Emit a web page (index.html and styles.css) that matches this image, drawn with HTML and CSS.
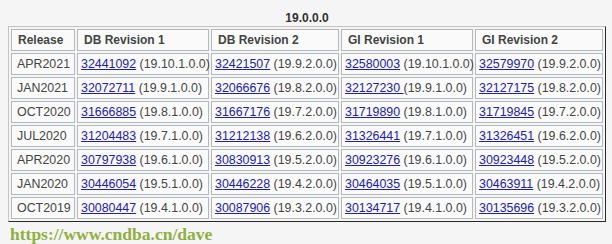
FILE: index.html
```html
<!DOCTYPE html>
<html>
<head>
<meta charset="utf-8">
<link rel="stylesheet" href="styles.css">
</head>
<body>
<table class="rev">
  <caption>19.0.0.0</caption>
  <thead>
    <tr>
      <th class="c1">Release</th>
      <th class="c2">DB Revision 1</th>
      <th class="c3">DB Revision 2</th>
      <th class="c4">GI Revision 1</th>
      <th class="c5">GI Revision 2</th>
    </tr>
  </thead>
  <tbody>
    <tr><td>APR2021</td><td><a href="#">32441092</a> (19.10.1.0.0)</td><td><a href="#">32421507</a> (19.9.2.0.0)</td><td><a href="#">32580003</a> (19.10.1.0.0)</td><td><a href="#">32579970</a> (19.9.2.0.0)</td></tr>
    <tr><td>JAN2021</td><td><a href="#">32072711</a> (19.9.1.0.0)</td><td><a href="#">32066676</a> (19.8.2.0.0)</td><td><a href="#">32127230&nbsp;</a>(19.9.1.0.0)</td><td><a href="#">32127175</a> (19.8.2.0.0)</td></tr>
    <tr><td>OCT2020</td><td><a href="#">31666885</a> (19.8.1.0.0)</td><td><a href="#">31667176</a> (19.7.2.0.0)</td><td><a href="#">31719890</a> (19.8.1.0.0)</td><td><a href="#">31719845</a> (19.7.2.0.0)</td></tr>
    <tr><td>JUL2020</td><td><a href="#">31204483</a> (19.7.1.0.0)</td><td><a href="#">31212138</a> (19.6.2.0.0)</td><td><a href="#">31326441</a> (19.7.1.0.0)</td><td><a href="#">31326451</a> (19.6.2.0.0)</td></tr>
    <tr><td>APR2020</td><td><a href="#">30797938</a> (19.6.1.0.0)</td><td><a href="#">30830913</a> (19.5.2.0.0)</td><td><a href="#">30923276</a> (19.6.1.0.0)</td><td><a href="#">30923448</a> (19.5.2.0.0)</td></tr>
    <tr><td>JAN2020</td><td><a href="#">30446054</a> (19.5.1.0.0)</td><td><a href="#">30446228</a> (19.4.2.0.0)</td><td><a href="#">30464035</a> (19.5.1.0.0)</td><td><a href="#">30463911</a> (19.4.2.0.0)</td></tr>
    <tr><td>OCT2019</td><td><a href="#">30080447</a> (19.4.1.0.0)</td><td><a href="#">30087906</a> (19.3.2.0.0)</td><td><a href="#">30134717</a> (19.4.1.0.0)</td><td><a href="#">30135696</a> (19.3.2.0.0)</td></tr>
  </tbody>
</table>
<div class="mark">https://www.cndba.cn/dave</div>
</body>
</html>
```
FILE: styles.css
```css
html, body {
  margin: 0;
  padding: 0;
}
body {
  background: #f5f5f5;
  padding: 0 8px;
  font-family: "Liberation Sans", Arial, sans-serif;
  font-size: 12px;
  color: #404040;
}
.rev {
  width: 598px;
  table-layout: fixed;
  border-collapse: separate;
  border-spacing: 2px;
  border: 1px solid;
  border-color: #c4c4c4 #2a2a2a #2a2a2a #c4c4c4;
}
.rev caption {
  font-weight: bold;
  color: #333;
  line-height: 15px;
  padding-top: 11px;
}
.rev th,
.rev td {
  box-sizing: border-box;
  border: 1px solid #b4b8bc;
  background: #fafafa;
  padding: 3px 1px 3px 3px;
  line-height: 14px;
  text-align: left;
  white-space: nowrap;
  overflow: visible;
}
.rev td {
  font-size: 12.4px;
  color: #454545;
}
.rev th {
  font-weight: bold;
  color: #444;
  padding-left: 6px;
}
.rev td:first-child {
  padding-left: 5px;
}
.rev .c1 { width: 64px; padding-left: 6px; }
.rev .c2 { width: 132px; }
.rev .c3 { width: 128px; }
.rev .c4 { width: 132px; }
.rev .c5 { width: 128px; }
.rev a {
  color: #2020b0;
  text-decoration: underline;
}
.mark {
  margin-top: 2px;
  padding-left: 2px;
  font-family: "Liberation Serif", "Times New Roman", serif;
  font-weight: bold;
  font-size: 17.5px;
  line-height: 20px;
  color: #8fb03e;
}
```
